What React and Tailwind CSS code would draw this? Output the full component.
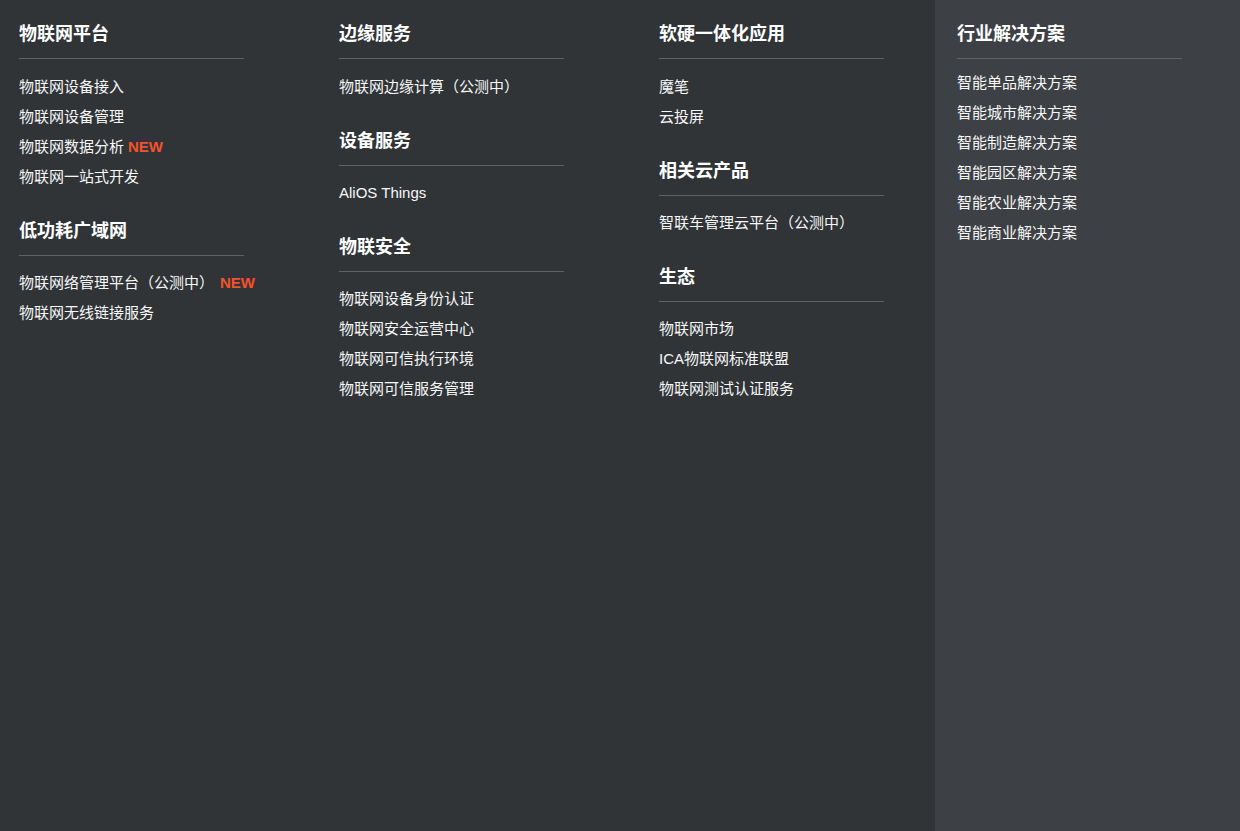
const columns = [
  [
    {
      title: '物联网平台',
      items: [
        { label: '物联网设备接入' },
        { label: '物联网设备管理' },
        { label: '物联网数据分析', tag: 'NEW' },
        { label: '物联网一站式开发' },
      ],
    },
    {
      title: '低功耗广域网',
      items: [
        { label: '物联网络管理平台（公测中）', tag: 'NEW', wide: true },
        { label: '物联网无线链接服务' },
      ],
    },
  ],
  [
    { title: '边缘服务', items: [{ label: '物联网边缘计算（公测中）' }] },
    { title: '设备服务', items: [{ label: 'AliOS Things' }] },
    {
      title: '物联安全',
      items: [
        { label: '物联网设备身份认证' },
        { label: '物联网安全运营中心' },
        { label: '物联网可信执行环境' },
        { label: '物联网可信服务管理' },
      ],
    },
  ],
  [
    { title: '软硬一体化应用', items: [{ label: '魔笔' }, { label: '云投屏' }] },
    { title: '相关云产品', items: [{ label: '智联车管理云平台（公测中）' }] },
    {
      title: '生态',
      items: [
        { label: '物联网市场' },
        { label: 'ICA物联网标准联盟' },
        { label: '物联网测试认证服务' },
      ],
    },
  ],
]

const solutions = [
  '智能单品解决方案',
  '智能城市解决方案',
  '智能制造解决方案',
  '智能园区解决方案',
  '智能农业解决方案',
  '智能商业解决方案',
]

function Group({ title, items, first }) {
  return (
    <div className={first ? '' : 'mt-[25px]'}>
      <h3 className="w-[225px] border-b border-[#5e6266] pb-[10px] text-[18px] font-bold leading-[28px] text-white">
        {title}
      </h3>
      <ul className={first ? 'mt-[13px]' : 'mt-[12px]'}>
        {items.map((item) => (
          <li key={item.label} className="text-[15px] leading-[30px] text-[#f7f7f7]">
            {item.label}
            {item.tag && (
              <span className={`font-bold text-[#f5522a] ${item.wide ? 'ml-[6px]' : 'ml-[4px]'}`}>
                {item.tag}
              </span>
            )}
          </li>
        ))}
      </ul>
    </div>
  )
}

export default function App() {
  return (
    <div
      className="flex h-[831px] w-full bg-[#303437]"
      style={{ fontFamily: '"Liberation Sans", "Noto Sans CJK SC", sans-serif' }}
    >
      {/* product columns */}
      <div className="flex w-[935px] shrink-0 pl-[19px] pt-5">
        {columns.map((groups, i) => (
          <div key={i} className="w-[320px] shrink-0">
            {groups.map((g, j) => (
              <Group key={g.title} {...g} first={j === 0} />
            ))}
          </div>
        ))}
      </div>

      {/* solutions panel */}
      <div className="flex-1 bg-[#3d4145] pl-[22px] pt-5">
        <h3 className="w-[225px] border-b border-[#5e6266] pb-[10px] text-[18px] font-bold leading-[28px] text-white">
          行业解决方案
        </h3>
        <ul className="mt-[9px]">
          {solutions.map((s) => (
            <li key={s} className="text-[15px] leading-[30px] text-[#f7f7f7]">
              {s}
            </li>
          ))}
        </ul>
      </div>
    </div>
  )
}
